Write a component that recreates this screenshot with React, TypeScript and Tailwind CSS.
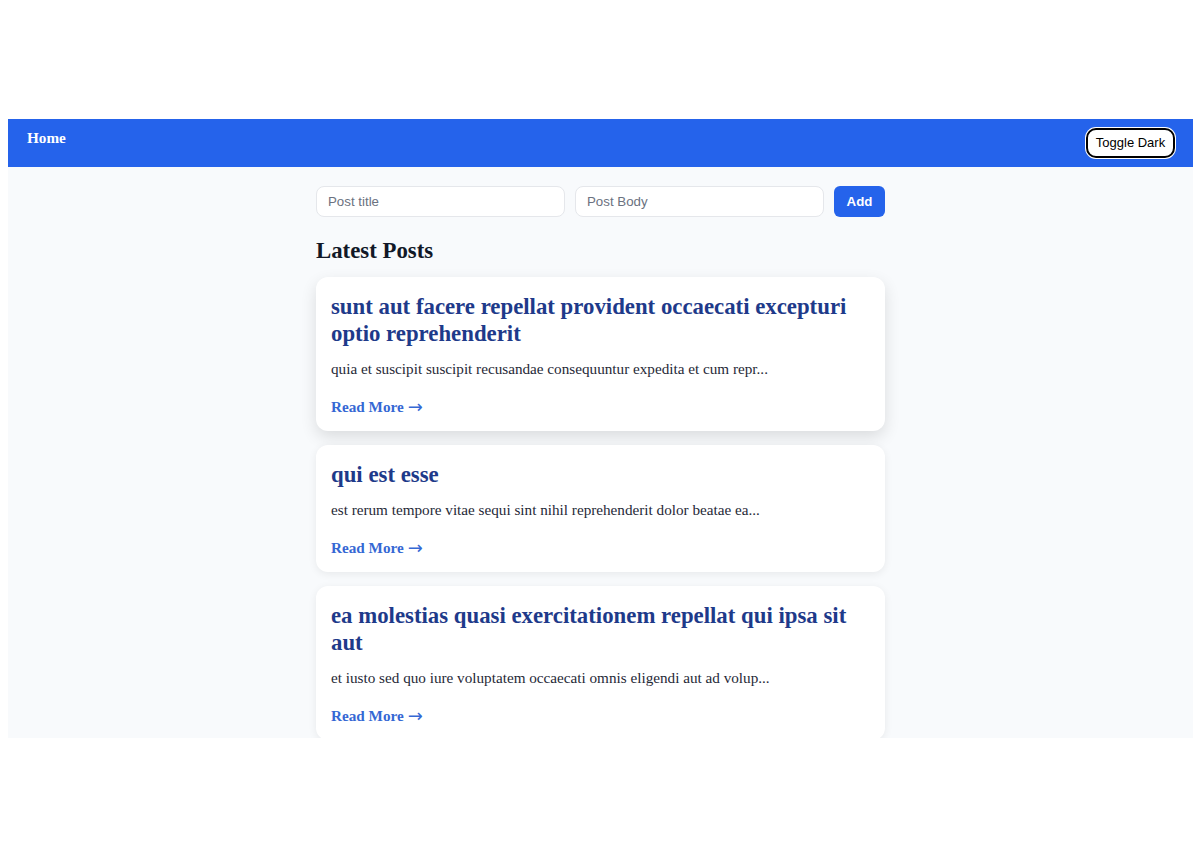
import { useState } from 'react';

type Post = {
  id: number;
  title: string;
  body: string;
};

const POSTS: Post[] = [
  {
    id: 1,
    title: 'sunt aut facere repellat provident occaecati excepturi optio reprehenderit',
    body: 'quia et suscipit suscipit recusandae consequuntur expedita et cum repr...',
  },
  {
    id: 2,
    title: 'qui est esse',
    body: 'est rerum tempore vitae sequi sint nihil reprehenderit dolor beatae ea...',
  },
  {
    id: 3,
    title: 'ea molestias quasi exercitationem repellat qui ipsa sit aut',
    body: 'et iusto sed quo iure voluptatem occaecati omnis eligendi aut ad volup...',
  },
];

const serif = "font-['Liberation_Serif','Times_New_Roman',serif]";
const sans = "font-['Liberation_Sans',Arial,sans-serif]";

const PostCard = ({ post, raised }: { post: Post; raised?: boolean }) => (
  <article
    className={
      raised
        ? 'rounded-xl bg-white px-[15px] pt-[16px] pb-[12px] shadow-[0_6px_16px_rgba(0,0,0,0.12)]'
        : 'rounded-xl bg-white px-[15px] pt-[16px] pb-[12px] shadow-[0_2px_8px_rgba(0,0,0,0.07)]'
    }
  >
    <h2 className={`${serif} text-[22.8px] font-bold leading-[27px] text-[#1e3a8a]`}>{post.title}</h2>
    <p className={`${serif} mt-[10px] text-[15.2px] leading-[24px] text-[#1f2937]`}>{post.body}</p>
    <a href="#" className={`${serif} mt-[14px] inline-flex items-center text-[15.2px] font-bold leading-[24px] text-[#3568d4]`}>
      Read More
      <span className="ml-[4px] font-['DejaVu_Sans',sans-serif] text-[18px] leading-[24px] font-normal">→</span>
    </a>
  </article>
);

export default function App() {
  const [title, setTitle] = useState('');
  const [body, setBody] = useState('');

  return (
    <div className="h-[850px] w-[1200px] bg-white px-[8px] pt-[119px]">
      <div className="h-[619px] w-[1185px] overflow-hidden bg-[#f8fafc]">
        <nav className="flex h-[48px] items-center justify-between bg-[#2563eb] pl-[19px] pr-[18px]">
          <span className={`${serif} pb-[10px] text-[15.2px] font-bold text-white`}>Home</span>
          <button
            className={`${sans} h-[30px] w-[89px] rounded-[10px] border-2 border-black bg-white text-[13px] text-black ring-1 ring-white`}
          >
            Toggle Dark
          </button>
        </nav>

        <main className="mx-auto w-[569px] pt-[19px]">
          <div className="flex gap-[10px]">
            <input
              value={title}
              onChange={(e) => setTitle(e.target.value)}
              placeholder="Post title"
              className={`${sans} h-[31px] w-[249px] rounded-lg border border-[#e5e7eb] bg-white px-[11px] text-[13.3px] text-gray-800 outline-none placeholder:text-[#6b7280]`}
            />
            <input
              value={body}
              onChange={(e) => setBody(e.target.value)}
              placeholder="Post Body"
              className={`${sans} h-[31px] w-[249px] rounded-lg border border-[#e5e7eb] bg-white px-[11px] text-[13.3px] text-gray-800 outline-none placeholder:text-[#6b7280]`}
            />
            <button className={`${sans} h-[31px] w-[51px] rounded-md bg-[#2563eb] text-[13.3px] font-bold text-white`}>
              Add
            </button>
          </div>

          <h1 className={`${serif} mt-[20px] text-[22.8px] font-bold leading-[28px] text-[#111827]`}>Latest Posts</h1>

          <div className="mt-[12px] flex flex-col gap-[14px]">
            {POSTS.map((post, i) => (
              <PostCard key={post.id} post={post} raised={i === 0} />
            ))}
          </div>
        </main>
      </div>
    </div>
  );
}
